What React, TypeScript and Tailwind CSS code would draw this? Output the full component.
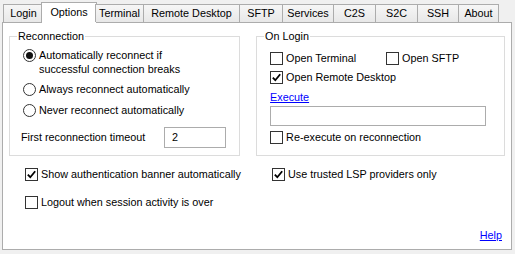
import React from "react";

const tabs = [
  { label: "Login", w: 40 },
  { label: "Options", w: 53 },
  { label: "Terminal", w: 48 },
  { label: "Remote Desktop", w: 96 },
  { label: "SFTP", w: 43 },
  { label: "Services", w: 51 },
  { label: "C2S", w: 42 },
  { label: "S2C", w: 42 },
  { label: "SSH", w: 41 },
  { label: "About", w: 41 },
];

function Radio({ checked }: { checked?: boolean }) {
  return (
    <span className="w-[13px] h-[13px] rounded-full border border-[#333] bg-white flex items-center justify-center shrink-0">
      {checked && <span className="w-[7px] h-[7px] rounded-full bg-[#111]" />}
    </span>
  );
}

function Check({ checked }: { checked?: boolean }) {
  return (
    <span className="w-[13px] h-[13px] border border-[#333] bg-white flex items-center justify-center shrink-0">
      {checked && (
        <svg width="9" height="9" viewBox="0 0 9 9">
          <path d="M0.8 4.6 L3.3 7.2 L8.2 1.2" fill="none" stroke="#000" strokeWidth="1.8" />
        </svg>
      )}
    </span>
  );
}

function CheckRow({ label, checked }: { label: string; checked?: boolean }) {
  return (
    <label className="flex items-center gap-[3px] h-[14px]">
      <Check checked={checked} />
      <span>{label}</span>
    </label>
  );
}

export default function App() {
  return (
    <div className="w-[515px] h-[254px] bg-[#f0f0f0] font-['Liberation_Sans',sans-serif] text-[10.8px] leading-[13px] text-black">
      {/* tab strip */}
      <div className="flex items-end h-[22px] pl-[3px] relative z-10">
        {tabs.map((t, i) =>
          t.label === "Options" ? (
            <div
              key={t.label}
              style={{ width: t.w + 3 }}
              className="h-[21px] -mx-[2px] -mb-px bg-white border border-b-0 border-[#acacac] flex items-start justify-center pt-[3px]"
            >
              {t.label}
            </div>
          ) : (
            <div
              key={t.label}
              style={{ width: t.w }}
              className={
                "h-[18px] bg-gradient-to-b from-[#f6f6f6] to-[#e8e8e8] border-t border-l border-[#acacac] flex items-center justify-center " +
                (i === tabs.length - 1 ? "border-r" : "")
              }
            >
              {t.label}
            </div>
          )
        )}
      </div>

      {/* page */}
      <div className="mx-[2px] w-[510px] h-[228px] bg-white border border-[#acacac] px-[6px] pt-[7px] flex flex-col">
        <div className="flex gap-[16px]">
          <fieldset className="w-[233px] h-[126px] border border-[#dcdcdc] px-[13px]">
            <legend className="px-[1px] ml-[-6px]">Reconnection</legend>
            <div className="flex flex-col gap-[7px] mt-[5px]">
              <label className="flex items-start gap-[3px] leading-[14px]">
                <span className="mt-[1px]"><Radio checked /></span>
                <span>
                  Automatically reconnect if
                  <br />
                  successful connection breaks
                </span>
              </label>
              <label className="flex items-center gap-[3px]">
                <Radio />
                <span>Always reconnect automatically</span>
              </label>
              <label className="flex items-center gap-[3px] mt-[1px]">
                <Radio />
                <span>Never reconnect automatically</span>
              </label>
            </div>
            <div className="flex items-center mt-[10px] -ml-[2px]">
              <span className="w-[143px]">First reconnection timeout</span>
              <div className="w-[62px] h-[21px] border border-[#acacac] px-[7px] flex items-center">2</div>
            </div>
          </fieldset>

          <fieldset className="w-[251px] h-[126px] border border-[#dcdcdc] px-[13px]">
            <legend className="px-[1px] ml-[-6px]">On Login</legend>
            <div className="flex mt-[8px]">
              <div className="w-[116px]">
                <CheckRow label="Open Terminal" />
              </div>
              <CheckRow label="Open SFTP" />
            </div>
            <div className="mt-[5px]">
              <CheckRow label="Open Remote Desktop" checked />
            </div>
            <div className="mt-[7px] text-[#0000ff] underline">Execute</div>
            <div className="mt-[2px] w-[216px] h-[20px] border border-[#acacac]" />
            <div className="mt-[4px]">
              <CheckRow label="Re-execute on reconnection" />
            </div>
          </fieldset>
        </div>

        <div className="flex mt-[11px] pl-[16px]">
          <div className="w-[247px] flex flex-col gap-[14px]">
            <CheckRow label="Show authentication banner automatically" checked />
            <CheckRow label="Logout when session activity is over" />
          </div>
          <div>
            <CheckRow label="Use trusted LSP providers only" checked />
          </div>
        </div>

        <div className="mt-auto mb-[7px] self-end pr-[3px] text-[#0000ff] underline">Help</div>
      </div>
    </div>
  );
}
